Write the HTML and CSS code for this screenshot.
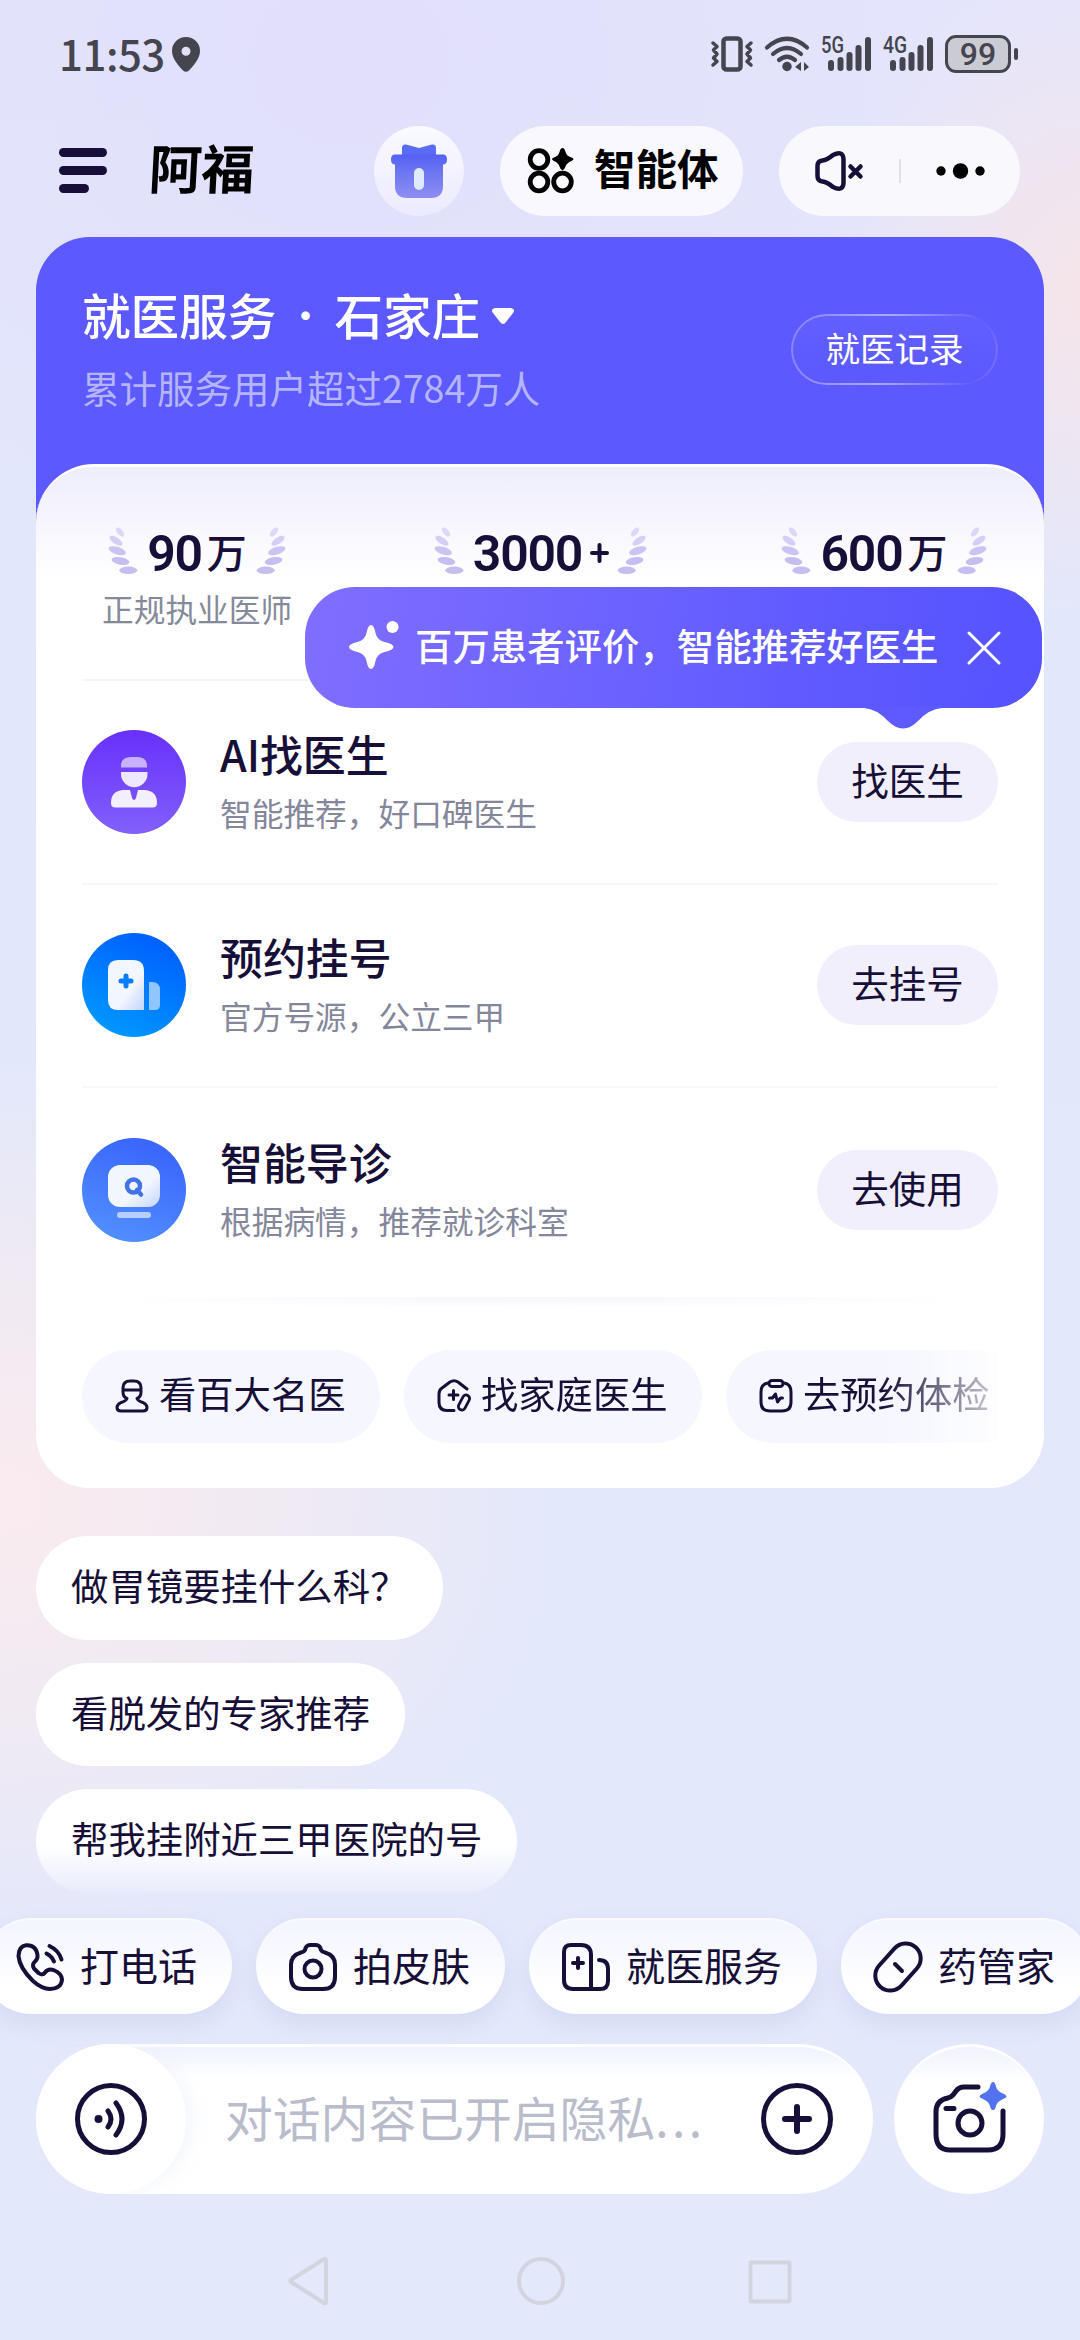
FILE: index.html
```html
<!DOCTYPE html>
<html lang="zh-CN">
<head>
<meta charset="utf-8">
<title>阿福</title>
<link rel="stylesheet" href="styles.css">
</head>
<body>
<svg class="defs" width="0" height="0" aria-hidden="true">
  <defs>
    <g id="laurel" fill="#c6bdf1">
      <ellipse cx="12" cy="5" rx="5.5" ry="2.8" transform="rotate(50 12 5)" opacity=".55"/>
      <ellipse cx="8" cy="13.7" rx="7.5" ry="3.3" transform="rotate(33 8 13.7)" opacity=".7"/>
      <ellipse cx="9.2" cy="23.7" rx="9" ry="3.8" transform="rotate(18 9.2 23.7)" opacity=".9"/>
      <ellipse cx="12.5" cy="34" rx="9" ry="3.7" transform="rotate(10 12.5 34)"/>
      <ellipse cx="20.3" cy="43.3" rx="9" ry="3.7"/>
    </g>
    <g id="bars" fill="#44454f">
      <rect x="7" y="24" width="6" height="11" rx="3"/>
      <rect x="16.500" y="21" width="6" height="14" rx="3"/>
      <rect x="25.500" y="16" width="6" height="19" rx="3"/>
      <rect x="34.500" y="9" width="6" height="26" rx="3"/>
      <rect x="44" y="1" width="6" height="34" rx="3"/>
    </g>
    <linearGradient id="gift" x1="0" y1="0" x2="0" y2="1"><stop offset="0" stop-color="#5560f5"/><stop offset=".45" stop-color="#6f78f0"/><stop offset="1" stop-color="#8f8df2"/></linearGradient>
    <linearGradient id="shade" x1="0" y1="0" x2="1" y2="1"><stop offset=".6" stop-color="#f2f6ff"/><stop offset="1" stop-color="#c3d6fb"/></linearGradient>
  </defs>
</svg>
<div class="phone">
  <header class="status">
    <div class="clock"><span>11:53</span>
      <svg width="28" height="35" viewBox="0 0 28 35"><path fill-rule="evenodd" fill="#44454f" d="M14 0a14 14 0 0 1 14 14c0 8-7 15-11 19.500q-3 2.500-6 0C7 29 0 22 0 14A14 14 0 0 1 14 0Zm0 9.700a4.500 4.500 0 1 0 0 9 4.500 4.500 0 0 0 0-9Z"/></svg>
    </div>
    <div class="signals">
      <svg width="42" height="36" viewBox="0 0 42 36" fill="none" stroke="#44454f"><rect x="12.500" y="2.500" width="17" height="31" rx="3" stroke-width="4.500"/><path stroke-width="3.500" stroke-linejoin="round" stroke-linecap="round" d="m2 7 4 3.500L2.500 14 6 18l-3.500 4L6 25.500 2 29M40 7l-4 3.500 3.500 3.500-3.500 4 3.500 4-3.500 3.500 4 3.500"/></svg>
      <svg class="wifi" width="44" height="36" viewBox="0 0 44 36"><g fill="none" stroke="#44454f" stroke-width="4.200" stroke-linecap="round"><path d="M2 11.500Q22-6 42 11.500M8 18q14-12 28 0M14 24q8-6.500 16 0"/></g><circle cx="22" cy="30.500" r="4.700" fill="#44454f"/><path fill="#44454f" d="m30 31 6-5v9zM44 31l-5-5v9z"/></svg>
      <svg class="cell" width="50" height="36" viewBox="0 0 50 36"><text class="net" x="0" y="17" textLength="23" lengthAdjust="spacingAndGlyphs">5G</text><use href="#bars"/></svg>
      <svg class="cell" width="50" height="36" viewBox="0 0 50 36"><text class="net" x="0" y="17" textLength="24" lengthAdjust="spacingAndGlyphs">4G</text><use href="#bars"/></svg>
      <div class="battery"><span>99</span></div><i class="nub"></i>
    </div>
  </header>

  <nav class="topbar">
    <div class="menu"><i></i><i></i><i></i></div>
    <div class="brand">阿福</div>
    <div class="gift">
      <svg width="56" height="55" viewBox="0 0 56 55"><path fill="#5a6cf6" d="M11 12V4q0-4 4-3.500L28 4 41 .5Q45 0 45 4v8Z"/><path fill="url(#gift)" d="M4 10.500h48q4 0 4 5t-4 5V42q0 12-12 12H16Q4 54 4 42V20.500q-4 0-4-5t4-5Z"/><rect x="23" y="24" width="10" height="22" rx="5" fill="#dfe9ff"/></svg>
    </div>
    <div class="agents">
      <svg width="46" height="46" viewBox="0 0 46 46"><g fill="none" stroke="#000" stroke-width="4.800"><circle cx="11" cy="11.500" r="8.800"/><circle cx="11" cy="34" r="8.800"/><circle cx="34.500" cy="34" r="8.800"/></g><path fill="#000" d="M34.500 0q2 0 3 4t6 5.500q4 1.500 0 3.500-5 2-6 5.500t-3 4q-2-.5-3-4T26 13q-4-2 0-3.500Q30.500 8 31.500 4t3-4Z"/></svg>
      <span>智能体</span>
    </div>
    <div class="controls">
      <svg width="49" height="40" viewBox="0 0 49 40" fill="none" stroke="#170f38" stroke-width="4.500" stroke-linecap="round" stroke-linejoin="round"><path d="M2.500 15q0-5 5-5.500Q12 9 18 4q10-5 10.500 4v24q-.5 9-10.500 4-6-5-10.500-5.500-5-.5-5-5.500Z"/><path d="m35.500 15.500 10 10m0-10-10 10"/></svg>
      <i class="sep"></i>
      <svg width="50" height="16" viewBox="0 0 50 16"><circle cx="5" cy="8" r="4.700"/><circle cx="24.500" cy="8" r="7.700"/><circle cx="44" cy="8" r="4.700"/></svg>
    </div>
  </nav>

  <main class="service">
    <div class="hero">
      <div class="hero-text">
        <h1><span>就医服务</span><b>·</b><span>石家庄</span><svg width="24" height="17" viewBox="0 0 24 17"><path fill="#fff" d="M4 0h16q5 1 2 5l-7 9q-3 4-6 0L2 5q-3-4 2-5Z"/></svg></h1>
        <p>累计服务用户超过2784万人</p>
      </div>
      <div class="record">就医记录</div>
    </div>
    <section class="panel">
      <div class="stats">
        <div class="stat s1">
          <div class="figure"><svg width="30" height="48"><use href="#laurel"/></svg><strong>90</strong><em>万</em><svg class="flip" width="30" height="48"><use href="#laurel"/></svg></div>
          <div class="label">正规执业医师</div>
        </div>
        <div class="stat s2">
          <div class="figure"><svg width="30" height="48"><use href="#laurel"/></svg><strong>3000</strong><svg class="plus" width="19" height="20" viewBox="0 0 19 20"><path d="M9.500 2v16M2 10h15" stroke="#170f38" stroke-width="4" stroke-linecap="round"/></svg><svg class="flip" width="30" height="48"><use href="#laurel"/></svg></div>
        </div>
        <div class="stat s3">
          <div class="figure"><svg width="30" height="48"><use href="#laurel"/></svg><strong>600</strong><em>万</em><svg class="flip" width="30" height="48"><use href="#laurel"/></svg></div>
        </div>
      </div>
      <div class="row">
        <div class="disc violet"><svg width="104" height="104" viewBox="0 0 104 104"><path fill="#c9b1ff" d="M39 37.500V36q0-9 10-9h6q10 0 10 9v1.500Z"/><path fill="#eee7ff" d="M39 42h26.500v2a13.200 13.200 0 0 1-26.500 0Z"/><path fill="#f4efff" d="M41 60h7l2 8q2 4 4 0l2-8h7q12 1 12 13 0 4.500-4.500 4.500h-37Q29 77.500 29 73q0-12 12-13Z"/></svg></div>
        <div class="info"><h2>AI找医生</h2><p>智能推荐，好口碑医生</p></div>
        <div class="go">找医生</div>
      </div>
      <div class="row">
        <div class="disc azure"><svg width="104" height="104" viewBox="0 0 104 104"><path fill="url(#shade)" d="M36 27h15q11 0 11 11v39H36q-10 0-10-10V37q0-10 10-10Z"/><path fill="#8fc6ff" d="M67 49h3q8 0 8 8v15q0 5-5 5h-6Z"/><path d="M44 43v10m-5-5h10" stroke="#087df5" stroke-width="5" stroke-linecap="round"/></svg></div>
        <div class="info"><h2>预约挂号</h2><p>官方号源，公立三甲</p></div>
        <div class="go">去挂号</div>
      </div>
      <div class="row last">
        <div class="disc blue"><svg width="104" height="104" viewBox="0 0 104 104"><rect x="26" y="27" width="52" height="42" rx="12" fill="url(#shade)"/><rect x="35" y="74" width="34" height="6" rx="3" fill="#b7ceff"/><g fill="none" stroke="#4273e8" stroke-width="4.500" stroke-linecap="round"><circle cx="51.500" cy="48" r="6.500"/><path d="m55 52 4 4.500"/></g></svg></div>
        <div class="info"><h2>智能导诊</h2><p>根据病情，推荐就诊科室</p></div>
        <div class="go">去使用</div>
      </div>
      <div class="chips">
        <div class="chip"><svg width="34" height="34" viewBox="0 0 34 34" fill="none" stroke="#170f38" stroke-width="3" stroke-linejoin="round"><path d="M8 9q0-7 7-7h4q7 0 7 7v4q0 5-4 6.500 1 2.500 6 4 4 2 4 5 0 3.500-4 3.500H6q-4 0-4-3.500 0-3 4-5 5-1.500 6-4Q8 18 8 13ZM8 11h18"/></svg><span>看百大名医</span></div>
        <div class="chip"><svg width="34" height="34" viewBox="0 0 34 34" fill="none" stroke="#170f38" stroke-width="3" stroke-linecap="round" stroke-linejoin="round"><path d="M17 31.500H10q-8 0-8-8V15q0-4 3-6l8-6q4-2.500 8 0l9 7M16.500 11.500v9M12 16h9"/><rect x="23.500" y="15.500" width="7" height="16" rx="3.500" transform="rotate(28 27 23.500)" stroke-width="2.800"/></svg><span>找家庭医生</span></div>
        <div class="chip"><svg width="34" height="34" viewBox="0 0 34 34" fill="none" stroke="#170f38" stroke-width="3" stroke-linecap="round" stroke-linejoin="round"><path d="M9 4Q2 5 2 13v10q0 9 9 9h12q9 0 9-9V13q0-8-7-9"/><rect x="10" y="1.500" width="14" height="6" rx="3"/><path d="M10.500 19h3l3-4 2 8 3-4h2"/></svg><span>去预约体检</span></div>
      </div>
      <div class="tip">
        <svg class="spark" width="50" height="50" viewBox="0 0 50 50" fill="#fff"><path d="M22 5q3 0 4.500 8 1.500 7 9 9 9 2 9 5t-9 5q-7.500 2-9 9-1.500 8-4.500 8t-4.500-8q-1.500-7-9-9Q0 30 0 27t8.500-5q7.500-2 9-9Q19 5 22 5Z"/><circle cx="43.500" cy="7" r="6"/></svg>
        <span>百万患者评价，智能推荐好医生</span>
        <svg class="close" width="34" height="34" viewBox="0 0 34 34" fill="none" stroke="#fff" stroke-width="3" stroke-linecap="round"><path d="m2 2 30 30M32 2 2 32"/></svg>
        <svg class="beak" width="78" height="22" viewBox="0 0 78 22"><path fill="#5f5aff" d="M0 0h78v1Q65 2 54 14q-15 15-30 0Q13 2 0 1Z"/></svg>
      </div>
    </section>
  </main>

  <section class="asks">
    <div>做胃镜要挂什么科？</div>
    <div>看脱发的专家推荐</div>
    <div class="fading">帮我挂附近三甲医院的号</div>
  </section>

  <section class="quick">
    <div><svg width="48" height="48" viewBox="0 0 48 48" fill="none" stroke="#170f38" stroke-width="4" stroke-linecap="round" stroke-linejoin="round"><path d="M2.500 13Q3 3 10 2.200 20 1.500 21.500 12q.5 4-2.500 6.500-3.500 3-1 7l4.500 4.500q4 3 6.500-.5 3-4 8.500-2.500 8 3 8.500 9.500-.5 9-12 9.500-8 0-17-8Q3.500 25 2.500 13ZM30.500 10.500q5.500 3 7.500 8M33.500 3Q43 7.500 45.500 16.500"/></svg><span>打电话</span></div>
    <div><svg width="48" height="48" viewBox="0 0 48 48" fill="none" stroke="#170f38" stroke-width="4" stroke-linejoin="round"><path d="M16 7q1-5 5-5h6q4 0 5 5 1 2 4 2.500 10 3 10 12V34q0 12-12 12H14Q2 46 2 34V21.500q0-9 10-12Q15 9 16 7Z"/><circle cx="24" cy="26" r="8.500"/></svg><span>拍皮肤</span></div>
    <div><svg width="48" height="48" viewBox="0 0 48 48" fill="none" stroke="#170f38" stroke-width="4" stroke-linecap="round" stroke-linejoin="round"><path d="M29 46H11q-9 0-9-9V9q0-7 7-7h10q10 0 10 10Zm0 0h9q8 0 8-8V26q0-9-9-9M16 15v10m-5-5h10"/></svg><span>就医服务</span></div>
    <div><svg width="48" height="48" viewBox="0 0 48 48" fill="none" stroke="#170f38" stroke-width="4" stroke-linecap="round"><rect x="9" y="-2.500" width="30" height="53" rx="15" transform="rotate(42 24 24)"/><path d="m21 21 7 7"/></svg><span>药管家</span></div>
  </section>

  <footer class="composer">
    <div class="input">
      <div class="voice"><svg width="72" height="72" viewBox="0 0 72 72" fill="none" stroke="#170f38" stroke-width="5" stroke-linecap="round"><circle cx="36" cy="36" r="33.500"/><path d="M33 28q6 8 0 16M41 20q12 16 0 32"/><circle cx="23.500" cy="36" r="4" fill="#170f38" stroke="none"/></svg></div>
      <div class="hint">对话内容已开启隐私<span>...</span></div>
      <svg class="add" width="72" height="72" viewBox="0 0 72 72" fill="none" stroke="#170f38" stroke-width="5" stroke-linecap="round"><circle cx="36" cy="36" r="33.500"/><path d="M36 24v24M24 36h24" stroke-width="6"/></svg>
    </div>
    <div class="shoot"><svg width="74" height="74" viewBox="0 0 74 74" fill="none" stroke="#170f38" stroke-width="5" stroke-linecap="round" stroke-linejoin="round"><path d="M45 6H31q-5 0-8 4l-3 4q-2 2-5 3Q3 19 3 31v22q0 16 14 16h38q15 0 15-16V30M13 27.500h8"/><circle cx="37" cy="42" r="12"/><path fill="#5372ee" stroke="none" d="M60 1q2 0 3 4.500t7 7q7 3 0 5.500-6 2.500-7 7t-3 4q-2 .5-3-4t-7-7q-7-2.500 0-5.500 6-2.500 7-7t3-4.500Z"/></svg></div>
  </footer>

  <div class="sysnav">
    <svg width="42" height="48" viewBox="0 0 42 48"><path d="M38 3v42q0 2-2 1L3 25q-1.500-1 0-2L36 2q2-1 2 1Z"/></svg>
    <svg width="48" height="48" viewBox="0 0 48 48"><circle cx="24" cy="24" r="22"/></svg>
    <svg width="44" height="44" viewBox="0 0 44 44"><rect x="2.500" y="2.500" width="39" height="39" rx="1"/></svg>
  </div>
</div>
</body>
</html>
```

FILE: styles.css
```css
* { box-sizing: border-box; margin: 0; padding: 0; }
body {
  width: 1080px; height: 2340px; overflow: hidden;
  font-family: "Noto Sans CJK SC", sans-serif; color: #170f38;
  background:
    radial-gradient(ellipse 260px 330px at 1090px 290px, #f6e5e9 0, rgba(246,229,233,0) 100%),
    radial-gradient(ellipse 560px 440px at 0 1500px, #faebef 0, rgba(246,235,240,.75) 45%, rgba(235,232,250,0) 100%),
    radial-gradient(ellipse 620px 500px at 350px 60px, #e1dffb 0, rgba(226,226,252,0) 100%),
    linear-gradient(#e4e5fc 0, #e2e8fb 700px, #e4e8fb 100%);
}
.defs { position: absolute; }
svg { display: block; flex: none; overflow: visible; }
.phone { width: 1080px; height: 2340px; display: flex; flex-direction: column; overflow: hidden; }
h1, h2, strong, em { font-style: normal; font-weight: 500; }

.status { height: 108px; padding: 0 62px 0 59px; display: flex; justify-content: space-between; align-items: center; color: #44454f; }
.clock { display: flex; align-items: center; gap: 9px; }
.clock span { width: 104px; font-size: 42px; font-weight: 500; letter-spacing: -.5px; line-height: 50px; white-space: nowrap; transform: translateY(-1px); }
.signals { display: flex; align-items: center; }
.wifi { margin-left: 12px; }
.cell { margin-left: 12px; }
.net { font: 500 24px Roboto, sans-serif; fill: #44454f; }
.battery { margin-left: 12px; width: 66px; height: 38px; border: 3px solid #44454f; border-radius: 11px; background: #cbcbd4; display: flex; align-items: center; justify-content: center; font: 500 32px/32px Roboto, sans-serif; }
.nub { width: 4px; height: 12px; margin-left: 3px; border-radius: 2px; background: #44454f; }

.topbar { height: 129px; padding: 18px 60px 0 59px; display: flex; align-items: flex-start; }
.menu { display: flex; flex-direction: column; gap: 9px; padding-top: 22px; width: 48px; }
.menu i { height: 9px; border-radius: 5px; background: #170f38; }
.menu i:last-child { width: 30px; }
.brand { width: 110px; margin-left: 42px; height: 90px; font-size: 53px; line-height: 80px; font-weight: 700; letter-spacing: -.5px; color: #000; transform: skewX(-3deg); }
.gift { width: 90px; height: 90px; margin-left: 115px; border-radius: 50%; background: linear-gradient(#fafaff, #eceaff); display: flex; justify-content: center; padding-top: 18px; }
.agents { width: 243px; height: 90px; margin-left: 36px; border-radius: 45px; background: #f8f8fe; padding-left: 28px; display: flex; align-items: center; gap: 20px; font-size: 41.500px; font-weight: 700; color: #000; }
.agents span { transform: translateY(-4px); }
.controls { width: 241px; height: 90px; margin-left: 36px; border-radius: 45px; background: #f9f8fc; display: flex; align-items: center; padding-left: 36px; }
.sep { width: 2px; height: 24px; margin: 0 35px; background: #e2e0ea; }

.service { width: 1008px; height: 1251px; margin-left: 36px; border-radius: 54px; background: linear-gradient(#5b59ff 0 400px, #fff 400px); }
.hero { height: 227px; padding: 0 46px; display: flex; justify-content: space-between; }
.hero-text { padding-top: 47px; color: #fff; }
.hero h1 { display: flex; align-items: center; height: 60px; font-size: 48.600px; line-height: 60px; }
.hero h1 b { width: 58px; text-align: center; font-size: 40px; font-weight: 400; }
.hero h1 svg { margin: 5px 0 0 11px; }
.hero p { margin-top: 18px; font-size: 37.500px; line-height: 50px; color: #b5b4fc; }
.record { width: 207px; height: 71px; margin-top: 77px; border-radius: 36px; border: 2px solid transparent; background: linear-gradient(#615ffe, #5b59ff) padding-box, linear-gradient(100deg, #8583fb, #aaa9ff 45%, #605eff 88%, #7775ff) border-box; color: #fff; font-size: 34.500px; line-height: 63px; text-align: center; }

.panel { position: relative; height: 1024px; border-radius: 58px; background: linear-gradient(#eeeefb 0, #f6f5fe 50px, #fff 115px); border-top: 3px solid #fff; padding: 0 46px; }
.stats { height: 214px; padding-top: 60px; display: flex; align-items: flex-start; border-bottom: 2px solid #f5f5f8; }
.s1 { margin-left: 20px; width: 190px; }
.s2 { margin-left: 142px; width: 213px; }
.s3 { margin-left: 135px; width: 204px; }
.figure { display: flex; justify-content: center; align-items: center; height: 48px; }
.figure strong { font-family: Roboto, sans-serif; font-size: 50px; font-weight: 600; letter-spacing: -1.200px; line-height: 48px; margin: 5px 0 0 9px; }
.figure em { font-size: 40px; line-height: 48px; margin: -1px 9px 0 5px; }
.figure .plus { margin: 4px 8px 0 8px; }
.flip { transform: scaleX(-1); }
.label { margin-top: 14px; font-size: 31.700px; line-height: 38px; text-align: center; color: #858a9b; white-space: nowrap; }

.row { height: 203.500px; display: flex; align-items: center; border-bottom: 2px solid #f8f8fa; }
.disc { width: 104px; height: 104px; border-radius: 50%; flex: none; }
.violet { background: linear-gradient(#6830fb, #8160fb); }
.azure { background: linear-gradient(205deg, #0062ff 15%, #0098ff 90%); }
.blue { background: linear-gradient(200deg, #3964fb 10%, #5291ff 95%); }
.info { flex: 1; padding-left: 34px; }
.info h2 { font-size: 42.900px; line-height: 56px; margin-top: -5px; }
.info p { margin-top: 9px; font-size: 31.700px; line-height: 44px; color: #84879b; }
.go { width: 181px; height: 80px; border-radius: 40px; background: #f0effb; font-size: 37.500px; font-weight: 400; line-height: 74px; text-align: center; }
.last { border: 0; }
.chips { position: relative; height: 160px; margin-top: 5px; border-top: 0; padding-top: 53px; display: flex; gap: 24px; overflow: hidden; -webkit-mask-image: linear-gradient(90deg, #000 800px, transparent 945px); mask-image: linear-gradient(90deg, #000 800px, transparent 945px); background: radial-gradient(ellipse 460px 11px at 50% 0, #f6f6fb, #fff); }
.chip { flex: none; width: 298px; height: 93px; border-radius: 47px; background: #f5f6ff; display: flex; align-items: center; padding-left: 33px; gap: 10px; font-size: 37.300px; }
.chip span { transform: translateY(-3px); }

.tip { position: absolute; left: 269px; top: 120px; width: 737px; height: 121px; border-radius: 50px; background: linear-gradient(100deg, #806eff, #5f5aff 70%, #5552ff); color: #fff; display: flex; align-items: center; padding-left: 44px; font-size: 37.400px; }
.tip span { margin-left: 16px; transform: translateY(-3px); white-space: nowrap; font-weight: 500; }
.tip .spark { margin-top: -5px; }
.tip .close { margin-left: 29px; }
.beak { position: absolute; left: 559px; top: 120px; }

.asks { padding: 48px 0 0 36px; height: 430px; display: flex; flex-direction: column; align-items: flex-start; gap: 23px; font-size: 37.400px; }
.asks div { height: 103.500px; line-height: 98px; border-radius: 52px; background: #fff; padding: 0 35px; flex: none; white-space: nowrap; }
.asks .fading { background: linear-gradient(#fff 55%, #e8ebfc); }

.quick { height: 96px; margin-left: -17px; display: flex; gap: 24px; }
.quick div { flex: none; height: 96px; border-radius: 48px; padding: 0 35px 0 33px; display: flex; align-items: center; gap: 16px; font-size: 39px; background: linear-gradient(#f3f5ff, #fff 75%); border-top: 2px solid #fafbff; box-shadow: 0 10px 22px rgba(150,165,215,.2); }
.quick span { transform: translateY(-3px); }

.composer { margin-top: 30px; padding-left: 36px; display: flex; gap: 21px; height: 150px; }
.input { width: 837px; height: 150px; border-radius: 75px; background: linear-gradient(#f0f2fd, #fff 30px); border-top: 3px solid #fff; display: flex; align-items: center; }
.voice { width: 150px; height: 150px; margin-top: -3px; border-radius: 50%; background: #fff; display: flex; align-items: center; justify-content: center; box-shadow: 8px 0 14px rgba(238,241,252,.5); clip-path: inset(0 -40px 0 0); }
.hint { width: 536px; margin-left: 39px; font-size: 47.800px; line-height: 64px; color: #b9bccb; white-space: nowrap; transform: translateY(-4px); }
.hint span { letter-spacing: 3.500px; }
.add { margin-top: -3px; }
.shoot { width: 150px; height: 150px; border-radius: 50%; background: linear-gradient(#f0f2fd, #fff 35px); border-top: 3px solid #fff; display: flex; justify-content: center; padding: 34px 0 0 2px; }

.sysnav { height: 146px; padding: 63px 0 0 288px; display: flex; }
.sysnav svg { fill: none; stroke: #d2d4e0; stroke-width: 4; }
.sysnav svg:nth-child(2) { margin-left: 187px; }
.sysnav svg:nth-child(3) { margin: 3px 0 0 183px; }
```
